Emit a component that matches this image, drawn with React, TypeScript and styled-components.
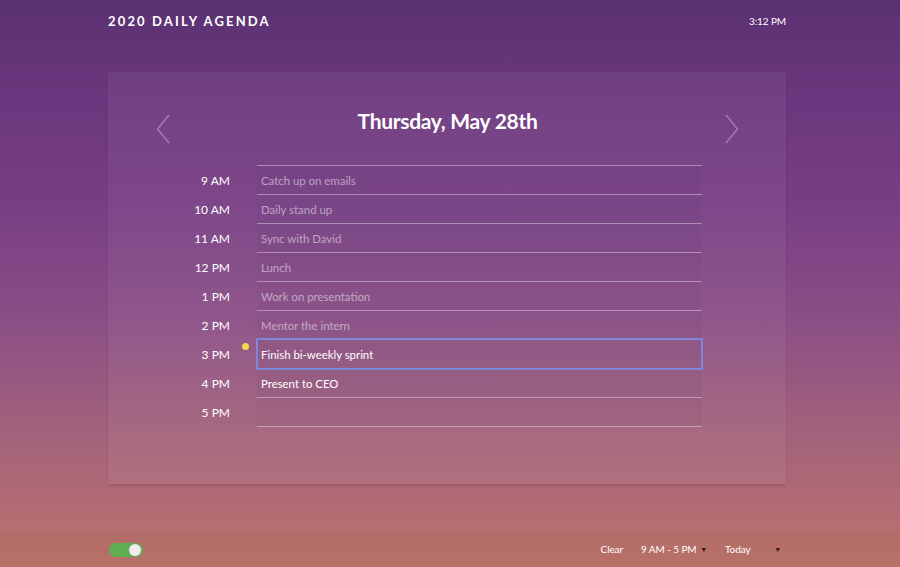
import React from "react";
import styled, { createGlobalStyle } from "styled-components";

const Global = createGlobalStyle`
  html, body { margin: 0; padding: 0; height: 100%; }
  body {
    font-family: Lato, "Open Sans", Arial, sans-serif;
    background: linear-gradient(180deg, #5a3172 0%, #6c377e 18%, #773e84 36%, #8a4e85 56%, #a76579 80%, #bf736e 100%);
    color: #fff;
  }
  #root { min-height: 100vh; }
`;

const Page = styled.div`
  min-height: 100vh;
  display: flex;
  flex-direction: column;
`;

const Header = styled.header`
  height: 42px;
  display: flex;
  align-items: center;
  justify-content: space-between;
  padding: 0 114px 0 108px;
`;

const Brand = styled.h1`
  margin: 0;
  font-size: 13px;
  font-weight: 700;
  letter-spacing: 2.15px;
  color: #fff;
`;

const Clock = styled.span`
  font-size: 10px;
  letter-spacing: -0.1px;
  color: #fff;
`;

const Main = styled.main`
  flex: 1;
  padding: 30px 114px 0 108px;
`;

const Card = styled.section`
  background: rgba(255, 255, 255, 0.05);
  box-shadow: 0 2px 2px rgba(80, 30, 60, 0.16);
  padding: 25px 0 57px;
`;

const TitleRow = styled.div`
  display: grid;
  grid-template-columns: 1fr auto 1fr;
  align-items: center;
  padding: 0 47px 0 48px;
  height: 34px;
  margin-bottom: 35px;
`;

const Arrow = styled.button<{ $side: "left" | "right" }>`
  background: none;
  border: 0;
  padding: 0;
  cursor: pointer;
  justify-self: ${(p) => (p.$side === "left" ? "start" : "end")};
  display: flex;
  margin-top: 17px;
`;

const Title = styled.h2`
  margin: 0;
  font-size: 21px;
  font-weight: 700;
  color: #fff;
  letter-spacing: -0.3px;
`;

const List = styled.div`
  display: grid;
  grid-template-columns: 122px 445px;
  column-gap: 27px;
`;

const Time = styled.div`
  font-size: 12px;
  color: #fff;
  text-align: right;
  height: 29px;
  line-height: 30px;
`;

const Cell = styled.div<{ $first?: boolean }>`
  position: relative;
  box-sizing: border-box;
  border-top: ${(p) => (p.$first ? "1px solid rgba(255,255,255,0.38)" : "0")};
  height: ${(p) => (p.$first ? "30px" : "29px")};
  margin-top: ${(p) => (p.$first ? "-1px" : "0")};
`;

const Field = styled.input<{ $past?: boolean; $focus?: boolean }>`
  display: block;
  width: 100%;
  box-sizing: border-box;
  background: rgba(60, 20, 70, 0.04);
  border: 0;
  border-bottom: 1px solid rgba(255, 255, 255, 0.38);
  padding: 1px 4px 0;
  font-family: Lato, Arial, sans-serif;
  font-size: 11.4px;
  color: ${(p) => (p.$past ? "rgba(255,255,255,0.5)" : "#fff")};
  outline: ${(p) => (p.$focus ? "2px solid #7d88da" : "none")};
  outline-offset: -1px;
  margin-top: ${(p) => (p.$focus ? "-1px" : "0")};
  height: ${(p) => (p.$focus ? "30px" : "100%")};
`;

const Dot = styled.span`
  position: absolute;
  left: -15px;
  top: 3px;
  width: 7px;
  height: 7px;
  border-radius: 50%;
  background: #f4d74e;
`;

const Footer = styled.footer`
  height: 34px;
  display: flex;
  align-items: center;
  padding: 0 119px 0 109px;
  background: rgba(140, 100, 40, 0.1);
`;

const Toggle = styled.span`
  width: 34px;
  height: 14px;
  border-radius: 8px;
  background: #5daf52;
  position: relative;
  display: inline-block;
  &::after {
    content: "";
    position: absolute;
    right: 2px;
    top: 1px;
    width: 12px;
    height: 12px;
    border-radius: 50%;
    background: #f1ecf0;
  }
`;

const Controls = styled.div`
  margin-left: auto;
  display: flex;
  align-items: center;
  font-size: 10px;
  letter-spacing: -0.1px;
  white-space: nowrap;
  margin-top: -2px;
`;

const Ctl = styled.span<{ $w?: number }>`
  display: inline-flex;
  align-items: center;
  justify-content: space-between;
  width: ${(p) => (p.$w ? `${p.$w}px` : "auto")};
  margin-left: ${(p) => (p.$w ? "18px" : "0")};
`;

const Caret = styled.span`
  font-size: 7px;
  color: #2a1a22;
`;

const rows = [
  { t: "9 AM", v: "Catch up on emails", past: true },
  { t: "10 AM", v: "Daily stand up", past: true },
  { t: "11 AM", v: "Sync with David", past: true },
  { t: "12 PM", v: "Lunch", past: true },
  { t: "1 PM", v: "Work on presentation", past: true },
  { t: "2 PM", v: "Mentor the intern", past: true },
  { t: "3 PM", v: "Finish bi-weekly sprint", now: true },
  { t: "4 PM", v: "Present to CEO" },
  { t: "5 PM", v: "" },
];

const Chevron = ({ dir }: { dir: "l" | "r" }) => (
  <svg width="14" height="30" viewBox="0 0 14 30" fill="none">
    <path
      d={dir === "l" ? "M13 1 L1.5 15 L13 29" : "M1 1 L12.5 15 L1 29"}
      stroke="rgba(255,255,255,0.32)"
      strokeWidth="1.4"
    />
  </svg>
);

export default function App() {
  return (
    <Page>
      <Global />
      <Header>
        <Brand>2020 DAILY AGENDA</Brand>
        <Clock>3:12 PM</Clock>
      </Header>
      <Main>
        <Card>
          <TitleRow>
            <Arrow $side="left" aria-label="previous day">
              <Chevron dir="l" />
            </Arrow>
            <Title>Thursday, May 28th</Title>
            <Arrow $side="right" aria-label="next day">
              <Chevron dir="r" />
            </Arrow>
          </TitleRow>
          <List>
            {rows.map((r, i) => (
              <React.Fragment key={r.t}>
                <Time>{r.t}</Time>
                <Cell $first={i === 0}>
                  {r.now && <Dot />}
                  <Field defaultValue={r.v} $past={r.past} $focus={r.now} />
                </Cell>
              </React.Fragment>
            ))}
          </List>
        </Card>
      </Main>
      <Footer>
        <Toggle />
        <Controls>
          <Ctl>Clear</Ctl>
          <Ctl $w={66}>
            9 AM - 5 PM <Caret>▼</Caret>
          </Ctl>
          <Ctl $w={56}>
            Today <Caret>▼</Caret>
          </Ctl>
        </Controls>
      </Footer>
    </Page>
  );
}
